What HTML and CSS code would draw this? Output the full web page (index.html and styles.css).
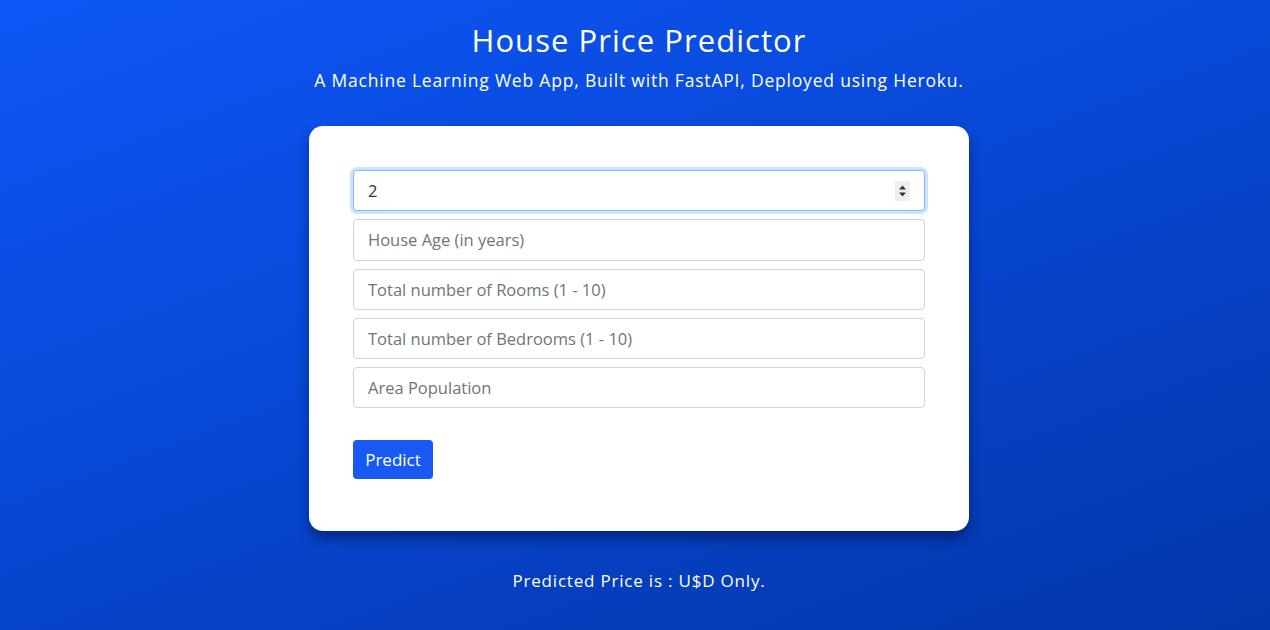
FILE: index.html
```html
<!DOCTYPE html>
<html lang="en">
<head>
<meta charset="utf-8">
<title>House Price Predictor</title>
<link rel="stylesheet" href="styles.css">
</head>
<body>
<main class="page">
  <header class="hero">
    <h1 class="title">House Price Predictor</h1>
    <p class="subtitle">A Machine Learning Web App, Built with FastAPI, Deployed using Heroku.</p>
  </header>
  <form class="card">
    <div class="field field-focused">
      <input class="input input-focused" type="text" value="2">
      <span class="spinner" aria-hidden="true">
        <svg width="9" height="14" viewBox="0 0 9 14"><path d="M4.5 1.5 L8 5.5 H1 Z" fill="#333"/><path d="M4.5 12.5 L8 8.5 H1 Z" fill="#333"/></svg>
      </span>
    </div>
    <div class="field"><input class="input" type="text" placeholder="House Age (in years)"></div>
    <div class="field"><input class="input" type="text" placeholder="Total number of Rooms (1 - 10)"></div>
    <div class="field"><input class="input" type="text" placeholder="Total number of Bedrooms (1 - 10)"></div>
    <div class="field"><input class="input" type="text" placeholder="Area Population"></div>
    <div class="actions"><button class="btn" type="button">Predict</button></div>
  </form>
  <p class="result">Predicted Price is : U$D Only.</p>
</main>
</body>
</html>
```
FILE: styles.css
```css
* { box-sizing: border-box; }
html, body { margin: 0; height: 100%; }
body {
  background: linear-gradient(160deg, #0d56f6 0%, #0848d6 45%, #0336a8 100%);
  font-family: "Open Sans", "Noto Sans", sans-serif;
  color: #fff;
  overflow: hidden;
}
.page {
  display: flex;
  flex-direction: column;
  align-items: center;
  padding-top: 20px;
  padding-left: 8px;
}
.hero { text-align: center; }
.title {
  margin: 0;
  font-family: "Open Sans", sans-serif;
  font-weight: 400;
  font-size: 31px;
  line-height: 40px;
  letter-spacing: 1.05px;
}
.subtitle {
  margin: 8px 0 0;
  font-size: 17.5px;
  line-height: 24px;
  letter-spacing: 0.8px;
}
.card {
  margin-top: 34px;
  width: 660px;
  background: #fff;
  border-radius: 14px;
  padding: 44px 44px 52px;
  box-shadow: 0 8px 12px rgba(0, 10, 60, 0.45);
  display: flex;
  flex-direction: column;
  gap: 8px;
}
.field { position: relative; }
.input {
  display: block;
  width: 100%;
  height: 41.25px;
  border: 1px solid #cfd3d8;
  border-radius: 4px;
  padding: 0 14px;
  font-family: "Open Sans", "Noto Sans", sans-serif;
  font-size: 16.5px;
  color: #333;
  background: #fff;
  outline: none;
}
.input::placeholder { color: #6f757b; }
.input-focused {
  border-color: #86b7fe;
  box-shadow: 0 0 0 3px rgba(13, 110, 253, 0.2);
}
.spinner {
  position: absolute;
  right: 15px;
  top: 11px;
  width: 15px;
  height: 20px;
  background: #efefef;
  display: flex;
  align-items: center;
  justify-content: center;
}
.actions { margin-top: 23.75px; }
.btn {
  height: 39px;
  width: 80px;
  border: none;
  border-radius: 4px;
  background: #1759f2;
  color: #fff;
  font-family: "Open Sans", "Noto Sans", sans-serif;
  font-size: 17px;
  padding: 0;
}
.result {
  margin: 38px 0 0;
  font-size: 17px;
  letter-spacing: 0.8px;
}
```
